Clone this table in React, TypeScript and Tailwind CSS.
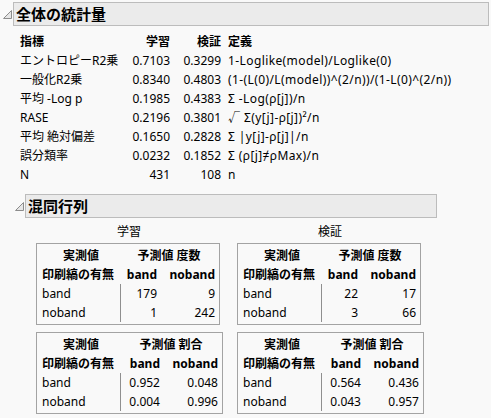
const FONT = "font-['Noto_Sans','Noto_Sans_CJK_JP',sans-serif]";

function Disclosure() {
  return (
    <svg width="9" height="9" viewBox="0 0 9 9" className="shrink-0">
      <polygon
        points="8.5,0.5 8.5,8.5 0.5,8.5"
        fill="#e6e6e6"
        stroke="#8c8c8c"
        strokeWidth="1"
      />
    </svg>
  );
}

function SectionHeader({ title, indent, width }: { title: string; indent: string; width: string }) {
  return (
    <div className={`flex items-center ${indent}`}>
      <Disclosure />
      <div
        className={`ml-[1px] h-[24px] ${width} border border-[#bcbcbc] bg-[#ebebeb] pl-[2px] flex items-center text-[15px] font-bold leading-none`}
      >
        {title}
      </div>
    </div>
  );
}

const stats = [
  ["エントロピーR2乗", "0.7103", "0.3299", "1-Loglike(model)/Loglike(0)"],
  ["一般化R2乗", "0.8340", "0.4803", "(1-(L(0)/L(model))^(2/n))/(1-L(0)^(2/n))"],
  ["平均 -Log p", "0.1985", "0.4383", "Σ -Log(ρ[j])/n"],
  ["RASE", "0.2196", "0.3801", "√ Σ(y[j]-ρ[j])²/n"],
  ["平均 絶対偏差", "0.1650", "0.2828", "Σ |y[j]-ρ[j]|/n"],
  ["誤分類率", "0.0232", "0.1852", "Σ (ρ[j]≠ρMax)/n"],
  ["N", "431", "108", "n"],
];

type Box = { kind: string; rows: [string, string, string][] };

function ConfBox({ box, wide }: { box: Box; wide: boolean }) {
  const c2 = wide ? "w-[43px]" : "w-[40px]";
  return (
    <div className="border border-[#a3a3a3] pt-[2px] pb-[2px] w-fit leading-[19px]">
      <div className="flex font-bold">
        <div className="w-[83px] pl-[5px] text-center">実測値</div>
        <div className={`${wide ? "w-[102px]" : "w-[98px]"} text-center`}>予測値 {box.kind}</div>
      </div>
      <div className="flex font-bold">
        <div className="w-[83px] pl-[5px]">印刷縞の有無</div>
        <div className={`${c2} pr-[3px] text-right`}>band</div>
        <div className="w-[59px] pr-[4px] text-right">noband</div>
      </div>
      {box.rows.map((r) => (
        <div key={r[0]} className="flex">
          <div className="w-[83px] pl-[5px]">{r[0]}</div>
          <div className={`${c2} pr-[3px] text-right border-l border-[#8f8f8f]`}>{r[1]}</div>
          <div className="w-[59px] pr-[4px] text-right">{r[2]}</div>
        </div>
      ))}
    </div>
  );
}

const groups: { label: string; boxes: Box[] }[] = [
  {
    label: "学習",
    boxes: [
      { kind: "度数", rows: [["band", "179", "9"], ["noband", "1", "242"]] },
      { kind: "割合", rows: [["band", "0.952", "0.048"], ["noband", "0.004", "0.996"]] },
    ],
  },
  {
    label: "検証",
    boxes: [
      { kind: "度数", rows: [["band", "22", "17"], ["noband", "3", "66"]] },
      { kind: "割合", rows: [["band", "0.564", "0.436"], ["noband", "0.043", "0.957"]] },
    ],
  },
];

export default function App() {
  return (
    <div className={`w-[491px] h-[418px] bg-[#f9f9f9] text-black text-[12px] pt-[2px] ${FONT}`}>
      <SectionHeader title="全体の統計量" indent="ml-[3px]" width="w-[476px]" />

      <div className="mt-[6px] pl-[20px] grid grid-cols-[105px_45px_51px_1fr] leading-[19px] whitespace-nowrap">
        <div className="font-bold">指標</div>
        <div className="font-bold text-right">学習</div>
        <div className="font-bold text-right">検証</div>
        <div className="font-bold pl-[7px]">定義</div>
        {stats.map((s) => (
          <div key={s[0]} className="contents">
            <div>{s[0]}</div>
            <div className="text-right">{s[1]}</div>
            <div className="text-right">{s[2]}</div>
            <div className="pl-[7px] tracking-[0.4px]">{s[3]}</div>
          </div>
        ))}
      </div>

      <div className="mt-[10px]">
        <SectionHeader title="混同行列" indent="ml-[15px]" width="w-[412px]" />
      </div>

      <div className="mt-[4px] pl-[36px] flex gap-[15px]">
        {groups.map((g) => (
          <div key={g.label} className="w-[186px] flex flex-col">
            <div className="text-center leading-[19px]">{g.label}</div>
            <div className="mt-[2px] flex flex-col gap-[7px]">
              {g.boxes.map((b, i) => (
                <ConfBox key={i} box={b} wide={i === 1} />
              ))}
            </div>
          </div>
        ))}
      </div>
    </div>
  );
}
